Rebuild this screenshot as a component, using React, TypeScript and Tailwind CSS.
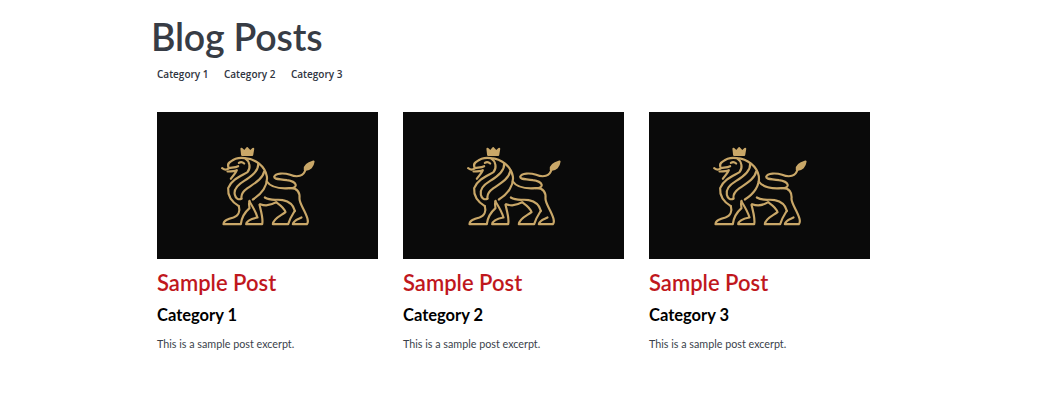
function Lion() {
  return (
    <svg viewBox="7.5 1.5 360 300" className="w-[120px] h-[100px]" fill="none" stroke="#c9a768" strokeWidth="6.5" strokeLinecap="round" strokeLinejoin="round">
      {/* crown */}
      <path d="M110 58 L108 40 L117 48 L125 38 L134 48 L143 40 L140 58 Z" fill="#c9a768" />
      {/* head */}
      <path d="M50 98 C58 104 64 104 70 98 C66 90 68 82 76 78 C88 68 104 66 118 68 C150 70 178 92 184 122 C188 150 168 176 142 192" />
      <path d="M70 98 C80 96 90 96 98 92 M66 108 C78 108 88 108 94 104 C90 116 80 122 76 130" />
      <path d="M100 82 C106 78 112 80 116 84" />
      <path d="M118 68 C134 78 136 98 126 110 C106 122 78 132 68 158 C66 182 80 200 100 212" />
      {/* mane strands */}
      <path d="M158 84 C160 106 140 122 116 136 C96 148 84 162 88 178 C90 188 98 194 108 190" />
      <path d="M176 108 C172 130 146 144 126 158 C112 168 106 176 108 188" />
      {/* front legs */}
      <path d="M100 212 C104 226 100 240 84 246 C68 250 54 254 54 266 L106 266 C108 248 116 232 132 218 C130 210 130 202 132 196" />
      <path d="M132 198 C142 214 152 232 156 246 C146 248 124 252 122 266 L170 266 C174 250 166 226 162 208" />
      {/* belly */}
      <path d="M164 206 C180 212 196 210 212 200 C226 210 236 216 240 230 C228 240 204 248 202 266 L248 266 C254 246 262 236 268 226" />
      <path d="M178 186 C196 198 216 190 232 194 C252 198 264 210 268 226" />
      {/* rear */}
      <path d="M184 138 C196 156 224 160 252 158 C276 156 284 172 282 190 C282 206 300 226 306 250 C308 258 306 264 304 266 L262 266 C264 254 276 252 288 246" />
      {/* tail */}
      <path d="M252 158 C282 158 274 138 244 134 C222 130 206 132 206 124 C210 112 236 112 254 118 C274 126 296 124 300 100" />
      {/* tail tip */}
      <path d="M298 102 C296 88 310 82 324 78 C322 92 314 104 298 102 Z" fill="#c9a768" />
    </svg>
  );
}

const posts = ["Category 1", "Category 2", "Category 3"];

export default function App() {
  return (
    <div className="min-h-[404px] w-[1040px] bg-white font-['Lato',sans-serif]">
      <div className="pl-[151px] pt-3">
        <h1 className="text-[37.5px] leading-[50px] font-semibold tracking-[-0.2px] text-[#373c45]">Blog Posts</h1>
        <ul className="flex gap-[15.5px] pl-1.5 pt-1 text-[10px] leading-4 font-semibold text-[#2f3440] font-['Open_Sans',sans-serif]">
          {posts.map((name) => (
            <li key={name}>{name}</li>
          ))}
        </ul>
        <div className="flex gap-[25px] pl-1.5 pt-[30px]">
          {posts.map((name) => (
            <article key={name} className="w-[221px]">
              <div className="flex h-[147px] items-center justify-center bg-[#0a0a0a]">
                <Lion />
              </div>
              <h2 className="pt-2.5 text-[22px] leading-7 font-semibold text-[#c0171d]">Sample Post</h2>
              <h3 className="pt-1.5 text-[16.5px] leading-6 font-bold text-black">{name}</h3>
              <p className="pt-[9px] text-[10.75px] leading-4 text-[#3a3f4a]">This is a sample post excerpt.</p>
            </article>
          ))}
        </div>
      </div>
    </div>
  );
}
